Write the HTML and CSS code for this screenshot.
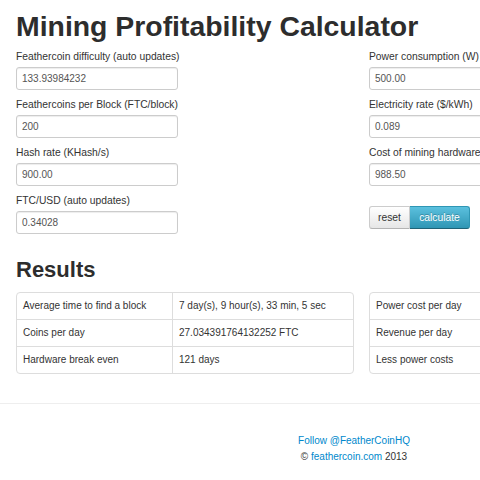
FILE: index.html
```html
<!DOCTYPE html>
<html>
<head>
<meta charset="utf-8">
<link rel="stylesheet" href="styles.css">
</head>
<body>
<div class="page">
  <h1 class="title">Mining Profitability Calculator</h1>
  <div class="row">
    <div class="col">
      <label class="lbl">Feathercoin difficulty (auto updates)</label>
      <div class="inp">133.93984232</div>
      <label class="lbl">Feathercoins per Block (FTC/block)</label>
      <div class="inp">200</div>
      <label class="lbl">Hash rate (KHash/s)</label>
      <div class="inp">900.00</div>
      <label class="lbl">FTC/USD (auto updates)</label>
      <div class="inp">0.34028</div>
    </div>
    <div class="col">
      <label class="lbl">Power consumption (W)</label>
      <div class="inp">500.00</div>
      <label class="lbl">Electricity rate ($/kWh)</label>
      <div class="inp">0.089</div>
      <label class="lbl">Cost of mining hardware ($)</label>
      <div class="inp">988.50</div>
      <div class="btns">
        <span class="btn btn-reset">reset</span><span class="btn btn-calc">calculate</span>
      </div>
    </div>
  </div>
  <h2 class="sub">Results</h2>
  <div class="row">
    <div class="tcol">
      <table class="tbl">
        <tr><td class="k">Average time to find a block</td><td>7 day(s), 9 hour(s), 33 min, 5 sec</td></tr>
        <tr><td class="k">Coins per day</td><td>27.034391764132252 FTC</td></tr>
        <tr><td class="k">Hardware break even</td><td>121 days</td></tr>
      </table>
    </div>
    <div class="tcol">
      <table class="tbl">
        <tr><td class="k">Power cost per day</td><td>$1.07</td></tr>
        <tr><td class="k">Revenue per day</td><td>$9.20</td></tr>
        <tr><td class="k">Less power costs</td><td>$8.13</td></tr>
      </table>
    </div>
  </div>
</div>
<hr class="rule">
<footer class="foot">
  <div><a href="#">Follow @FeatherCoinHQ</a></div>
  <div>© <a href="#">feathercoin.com</a> 2013</div>
</footer>
</body>
</html>
```
FILE: styles.css
```css
html, body { margin: 0; padding: 0; }
body {
  width: 480px;
  height: 480px;
  overflow: hidden;
  background: #fff;
  color: #333;
  font-family: "Liberation Sans", Arial, sans-serif;
  font-size: 10px;
}
.page {
  width: 691px;
  padding-left: 16px;
}
.title {
  margin: 0 0 7px 0;
  padding-top: 9px;
  font-size: 28.4px;
  line-height: 34px;
  font-weight: bold;
  color: #2d2d2d;
  white-space: nowrap;
}
.row {
  display: flex;
  gap: 15px;
}
.col {
  width: 338px;
  display: flex;
  flex-direction: column;
  align-items: flex-start;
}
.lbl {
  display: block;
  font-size: 10.3px;
  line-height: 14px;
  margin: 0 0 3px 0;
  white-space: nowrap;
}
.inp {
  box-sizing: border-box;
  width: 162px;
  height: 23px;
  border: 1px solid #ccc;
  border-radius: 3px;
  padding: 0 5px;
  line-height: 21px;
  color: #555;
  box-shadow: inset 0 1px 1px rgba(0,0,0,0.075);
  margin-bottom: 8px;
}
.btns {
  display: flex;
  margin-top: 12px;
}
.btn {
  box-sizing: border-box;
  height: 23px;
  line-height: 21px;
  border: 1px solid #ccc;
  font-size: 10.3px;
  text-align: center;
  padding: 0;
}
.btn-reset {
  color: #333;
  background: linear-gradient(#ffffff, #e6e6e6);
  border-color: #ccc #ccc #b3b3b3;
  border-radius: 3px 0 0 3px;
  width: 41px;
}
.btn-calc {
  color: #fff;
  background: linear-gradient(#5bc0de, #2f96b4);
  border-color: #2f96b4 #2f96b4 #1f6377;
  border-left: 0;
  border-radius: 0 3px 3px 0;
  width: 60px;
  text-shadow: 0 -1px 0 rgba(0,0,0,0.25);
}
.sub {
  margin: 15px 0 0 0;
  font-size: 22px;
  line-height: 26px;
  font-weight: bold;
  color: #2d2d2d;
}
.tcol {
  width: 338px;
  margin-top: 9px;
}
.tbl {
  width: 338px;
  border: 1px solid #ddd;
  border-collapse: separate;
  border-spacing: 0;
  border-radius: 4px;
}
.tbl td {
  height: 26px;
  padding: 0 6px;
  border-top: 1px solid #ddd;
  vertical-align: middle;
  line-height: 14px;
  white-space: nowrap;
}
.tbl tr:first-child td { border-top: 0; }
.tbl td + td { border-left: 1px solid #ddd; }
.tbl td.k { width: 143px; }
.rule {
  margin: 29px 0 0 0;
  border: 0;
  border-top: 1px solid #eee;
  width: 480px;
}
.foot {
  width: 708px;
  text-align: center;
  padding-top: 29px;
  line-height: 16px;
  font-size: 10px;
}
.foot a { color: #0088cc; text-decoration: none; }
```
